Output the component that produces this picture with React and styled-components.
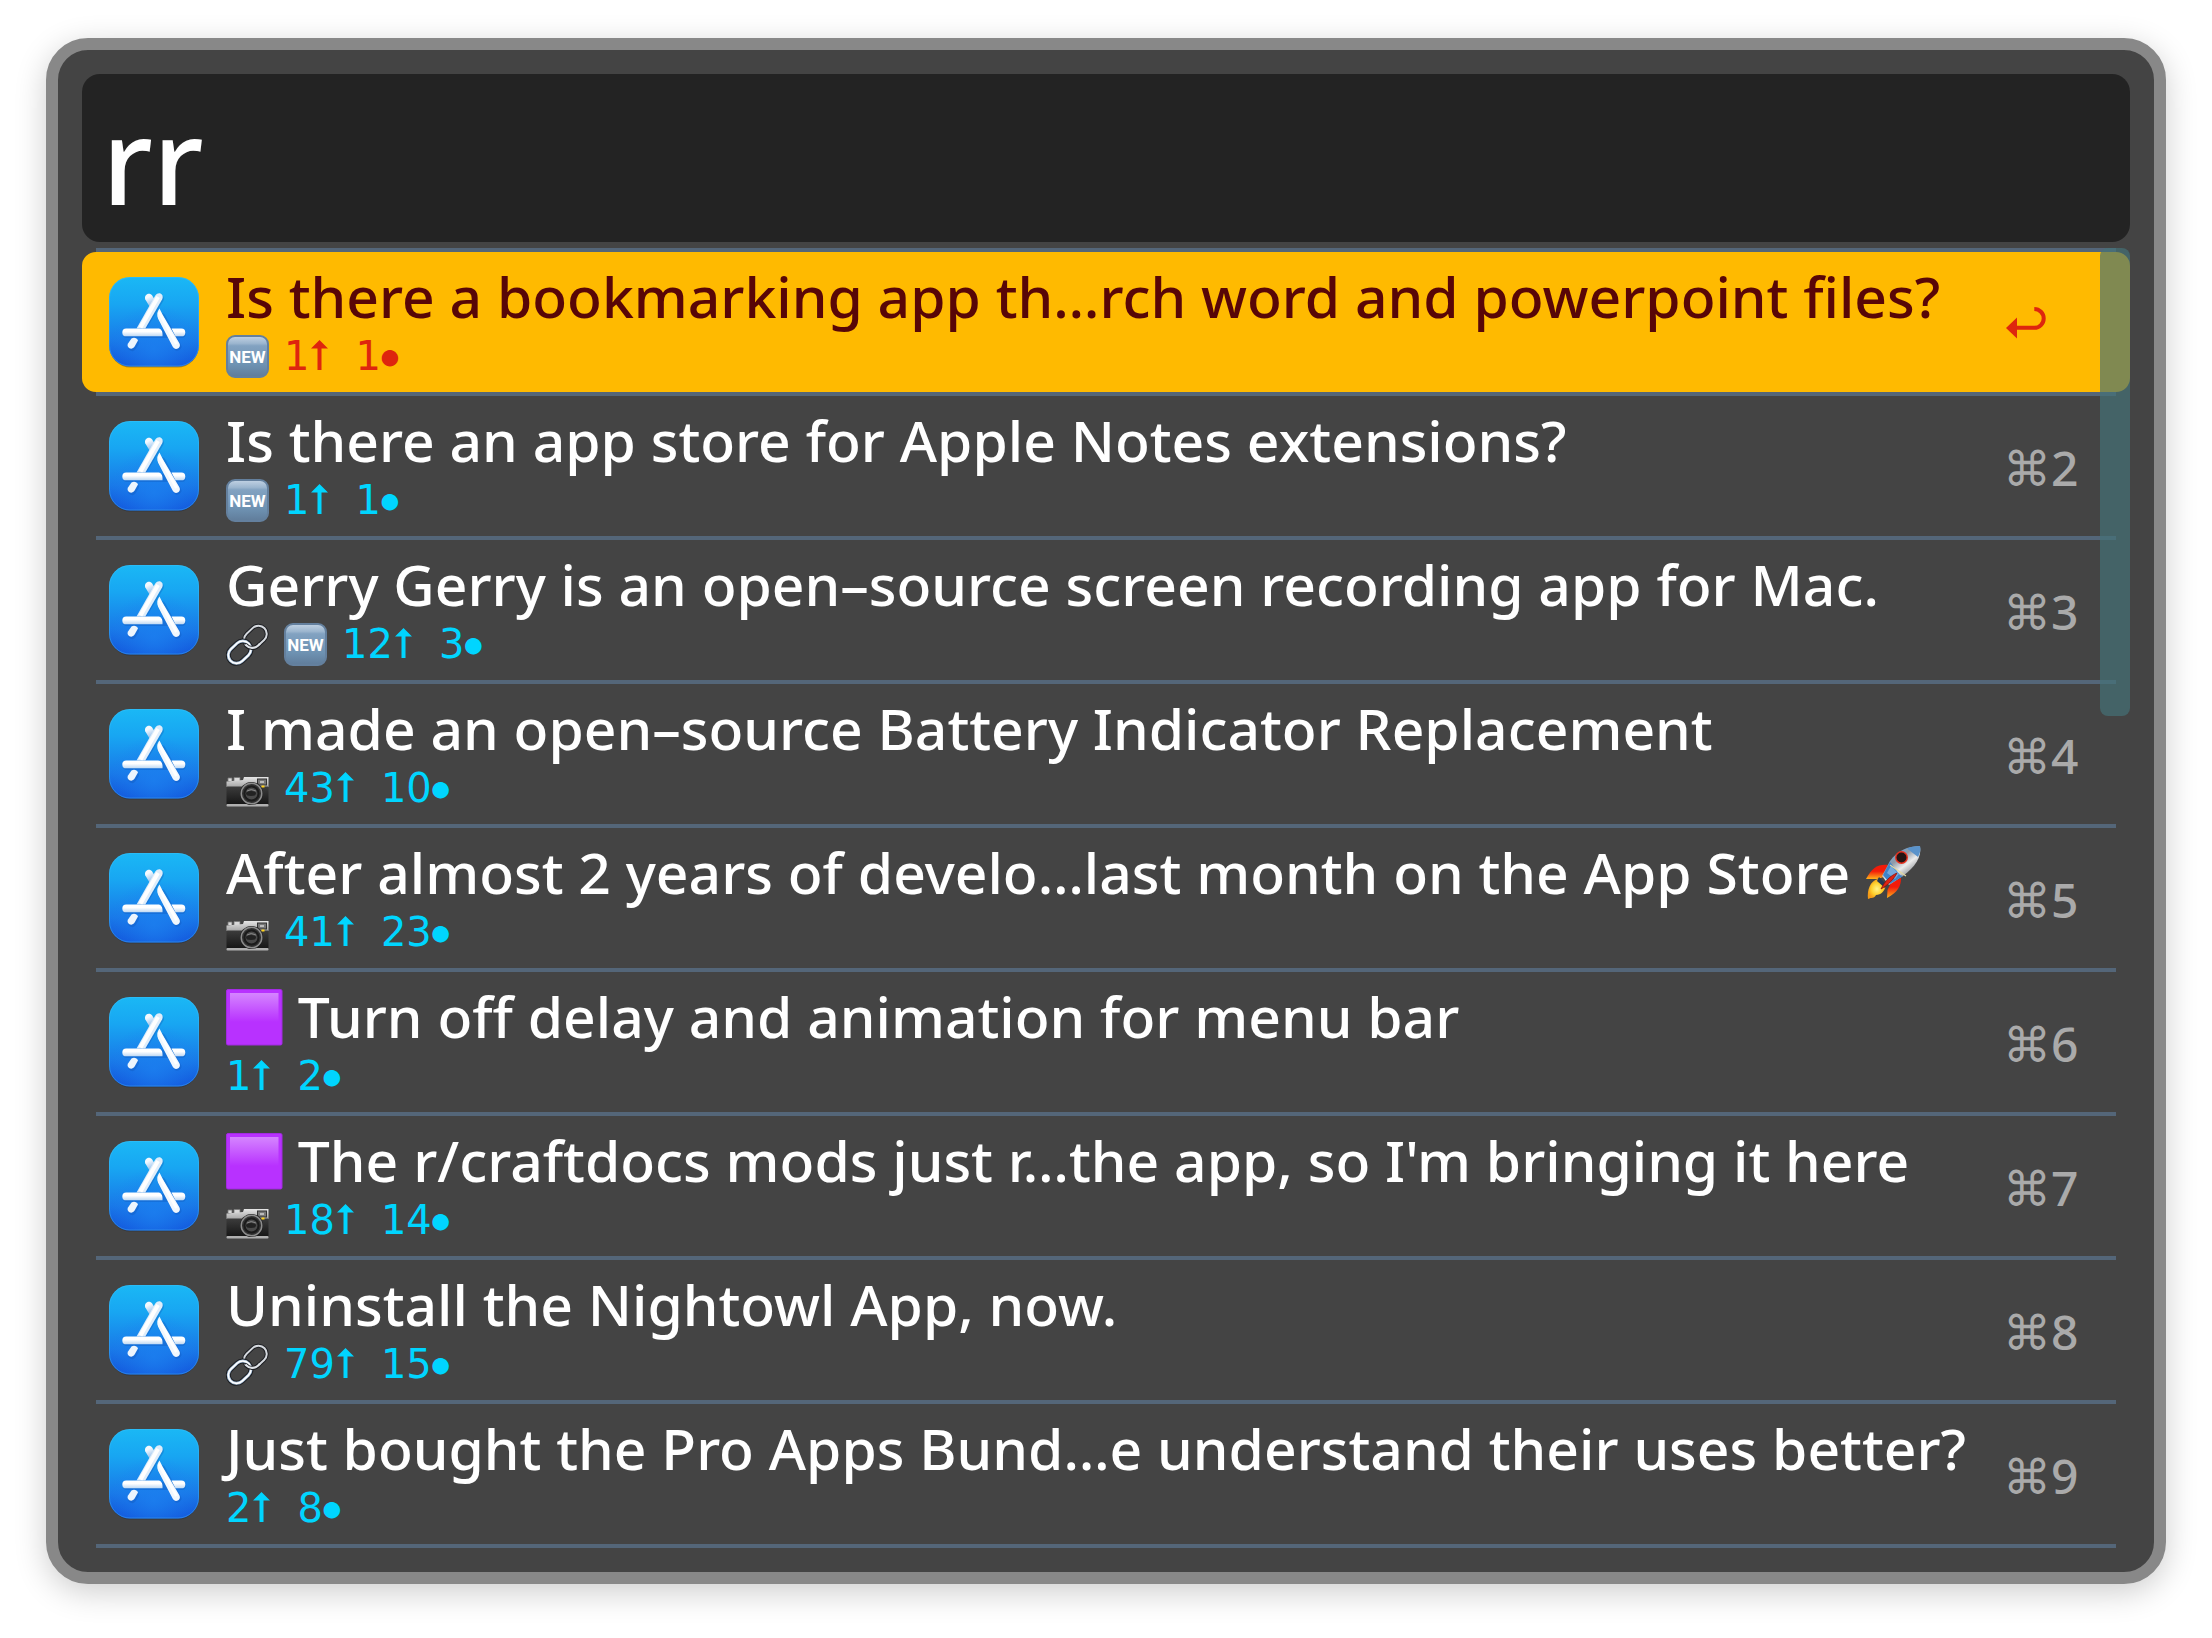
import React, { useId, useState } from "react";
import styled, { createGlobalStyle } from "styled-components";

const sans = `"Noto Sans", "Open Sans", sans-serif`;

const GlobalStyle = createGlobalStyle`
  *, *::before, *::after { box-sizing: border-box; }
  body { margin: 0; background: #fff; font-family: ${sans}; }
`;

const Page = styled.main`
  padding: 38px 46px 54px;
`;

const Launcher = styled.section`
  padding: 24px;
  border: 12px solid #888;
  border-radius: 42px;
  background: #444;
  box-shadow: 0 8px 32px rgba(0, 0, 0, 0.2);
`;

const SearchInput = styled.input`
  display: block;
  width: 100%;
  height: 168px;
  padding: 0 20px;
  border: 0;
  border-radius: 18px;
  outline: none;
  background: #232323;
  color: #fff;
  font: 500 120px ${sans};
`;

const Results = styled.div`
  position: relative;
  margin-top: 6px;
`;

const List = styled.ul`
  margin: 0;
  padding: 0;
  list-style: none;

  &::before {
    content: "";
    display: block;
    height: 4px;
    margin: 0 14px;
    background: #546679;
  }
`;

const Item = styled.li`
  &::after {
    content: "";
    display: block;
    height: 4px;
    margin: 0 14px;
    background: #546679;
  }
`;

const Row = styled.button`
  display: flex;
  align-items: center;
  width: 100%;
  height: 140px;
  padding: 0 48px 0 27px;
  border: 0;
  border-radius: 14px;
  background: ${(p) => (p.$selected ? "#ffba00" : "transparent")};
  color: ${(p) => (p.$selected ? "#580607" : "#fff")};
  text-align: left;
  cursor: pointer;
`;

const Body = styled.span`
  flex: 1;
  min-width: 0;
  padding: 11px 0 9px 27px;
`;

const Title = styled.span`
  display: block;
  white-space: nowrap;
  font: 500 57px/66px ${sans};
`;

const Meta = styled.span`
  display: flex;
  align-items: center;
  gap: 15px;
  height: 54px;
  color: ${(p) => (p.$selected ? "#de250e" : "#00d5ff")};
  font: 40px/54px "DejaVu Sans", sans-serif;
`;

const Counts = styled.span`
  display: flex;
  gap: 26px;
`;

const Count = styled.span`
  display: flex;
`;

const Dot = styled.span`
  display: flex;
  justify-content: center;
  width: 18px;
  font: 38px/54px "Liberation Sans", sans-serif;
`;

const ArrowSvg = styled.svg`
  width: 20px;
  height: 54px;
`;

const Shortcut = styled.span`
  display: flex;
  align-items: center;
  width: 79px;
  padding-top: 2px;
  color: #aaa;
  font: 500 48px ${sans};
`;

const ScrollThumb = styled.div`
  position: absolute;
  top: 0;
  right: 0;
  width: 30px;
  height: 468px;
  border-radius: 8px;
  background: rgba(68, 113, 120, 0.68);
  pointer-events: none;
`;

const StoreSvg = styled.svg`
  flex: none;
  width: 90px;
  height: 90px;
  overflow: visible;
`;

const GlyphSvg = styled.svg`
  flex: none;
  width: 43px;
  height: 43px;
`;

const TitleGlyph = styled.svg`
  width: 57px;
  height: 57px;
  vertical-align: -8px;
`;

const ReturnSvg = styled.svg`
  width: 40px;
  height: 32px;
  margin-left: 3px;
`;

function StoreIcon() {
  const id = useId();
  return (
    <StoreSvg viewBox="0 0 90 90" role="img" aria-label="App Store">
      <defs>
        <linearGradient id={id + "bg"} x1="0" y1="0" x2="0" y2="1">
          <stop offset="0" stopColor="#1ab8f5" />
          <stop offset="0.3" stopColor="#18a6f2" />
          <stop offset="0.72" stopColor="#1979e8" />
          <stop offset="1" stopColor="#1252da" />
        </linearGradient>
        <radialGradient id={id + "glow"} cx="0.5" cy="0.8" r="0.5">
          <stop offset="0" stopColor="#1c80f0" stopOpacity="0.8" />
          <stop offset="1" stopColor="#1c80f0" stopOpacity="0" />
        </radialGradient>
        <linearGradient id={id + "bar"} x1="0" y1="51" x2="0" y2="60" gradientUnits="userSpaceOnUse">
          <stop offset="0.4" stopColor="#fff" />
          <stop offset="1" stopColor="#b4d2f0" />
        </linearGradient>
        <linearGradient id={id + "back"} x1="38" y1="18" x2="44" y2="29" gradientUnits="userSpaceOnUse">
          <stop offset="0.2" stopColor="#f4f9fe" />
          <stop offset="1" stopColor="#86b8ea" />
        </linearGradient>
      </defs>
      <rect x="0.5" y="1.5" width="89" height="89" rx="21" fill="#222" opacity="0.35" />
      <rect width="90" height="89.500" rx="21" fill={`url(#${id}bg)`} />
      <rect width="90" height="89.500" rx="21" fill={`url(#${id}glow)`} />
      <rect x="0.5" y="0.5" width="89" height="88.500" rx="20.500" fill="none" stroke="#4ac4f8" strokeOpacity="0.35" />
      <g stroke="#0d4fae" strokeOpacity="0.3" strokeWidth="8" strokeLinecap="round" fill="none" transform="translate(0.800 1.500)">
        <path d="M50 20.500 31 52M52 39 67.500 68M25 64.500l-2.500 4M17 55.400H72" />
      </g>
      <path d="M36.300 22.400C34.500 17.500 40.500 14.500 43.200 18.500L46.500 24 42.200 32Z" fill={`url(#${id}back)`} />
      <path d="M62.500 51.500H72.400A3.900 3.900 0 0 1 72.400 59.300H66.500Z" fill={`url(#${id}bar)`} />
      <path d="M50.500 31.500C48 35 47.500 38 49.200 42L63.600 69.500C66 74.500 72.800 71 70.400 66.200L53.500 37.500Z" fill="#f1f7fd" />
      <path d="M50 35 67.500 67" stroke="#fff" strokeWidth="3" strokeOpacity="0.9" />
      <path d="M17.200 51.500H49C52 51.500 54 54 53.500 59.300H17.200A3.900 3.900 0 0 1 17.200 51.500Z" fill={`url(#${id}bar)`} />
      <path d="M46.300 18.500 27.500 51.500H36.300L53.200 22.300C55.500 17 49.500 13.800 46.300 18.500Z" fill="#dfedfa" />
      <path d="M49 20 31.500 50.500" stroke="#fff" strokeWidth="4" />
      <path d="M22.500 61.500C25 60 28 61 29 63.500L25.600 69.600C22.600 74 17 70.500 19 66.500Z" fill="#edf5fd" />
    </StoreSvg>
  );
}

function NewGlyph() {
  const id = useId();
  return (
    <GlyphSvg viewBox="0 0 43 43" role="img" aria-label="new">
      <defs>
        <linearGradient id={id} x1="0" y1="0" x2="0" y2="1">
          <stop offset="0" stopColor="#c3d3e4" />
          <stop offset="0.18" stopColor="#9cb6cf" />
          <stop offset="0.24" stopColor="#82a2c1" />
          <stop offset="0.7" stopColor="#6e92b2" />
          <stop offset="1" stopColor="#607c9a" />
        </linearGradient>
      </defs>
      <rect x="1" y="1" width="41" height="41" rx="8" fill={`url(#${id})`} stroke="#64809e" strokeWidth="2" />
      <text x="21.500" y="28" textAnchor="middle" fill="#fff" fontFamily="Roboto" fontWeight="700" fontSize="17">NEW</text>
    </GlyphSvg>
  );
}

function LinkGlyph() {
  return (
    <GlyphSvg viewBox="0 0 43 43" role="img" aria-label="link" fill="none">
      <g transform="rotate(-43 21.500 21.500)">
        <rect x="20" y="13" width="25" height="16.500" rx="8.250" stroke="#1c1e22" strokeWidth="4" />
        <rect x="20" y="13" width="25" height="16.500" rx="8.250" stroke="#d5d9de" strokeWidth="2" />
        <rect x="-2" y="13.500" width="25" height="16.500" rx="8.250" stroke="#1c1e22" strokeWidth="5" />
        <rect x="-2" y="13.500" width="25" height="16.500" rx="8.250" stroke="#a9c2dc" strokeWidth="3" />
        <rect x="-2" y="13.500" width="25" height="16.500" rx="8.250" stroke="#fff" strokeWidth="1.600" />
        <path d="M20 20V21.250A8.250 8.250 0 0 0 28.250 29.500H30" stroke="#1c1e22" strokeWidth="4" />
        <path d="M20 20V21.250A8.250 8.250 0 0 0 28.250 29.500H31" stroke="#dfe3e8" strokeWidth="2.200" />
      </g>
    </GlyphSvg>
  );
}

function CameraGlyph() {
  const id = useId();
  return (
    <GlyphSvg viewBox="0 0 43 43" role="img" aria-label="camera">
      <defs>
        <linearGradient id={id + "t"} x1="0" y1="0" x2="0" y2="1">
          <stop offset="0" stopColor="#e6e6e6" />
          <stop offset="1" stopColor="#a6a6a6" />
        </linearGradient>
        <linearGradient id={id + "b"} x1="0" y1="0" x2="0" y2="1">
          <stop offset="0" stopColor="#3c3c3c" />
          <stop offset="1" stopColor="#151515" />
        </linearGradient>
      </defs>
      <path d="M2 14V11h4v3M8 14v-3.500h6V14" fill="#d9d9d9" stroke="#777" strokeWidth="0.800" />
      <path d="M0.500 14.500 17 13l1-3H42.500V20H0.500Z" fill={`url(#${id}t)`} />
      <rect x="0.500" y="19.500" width="42" height="18.500" rx="1" fill={`url(#${id}b)`} />
      <rect x="0.500" y="37" width="42" height="2.500" rx="1" fill="#b0b0b0" />
      <rect x="31.500" y="12" width="9" height="6" fill="#777" stroke="#333" />
      <rect x="34" y="14" width="4" height="2" fill="#bbb" />
      <circle cx="25.500" cy="26.500" r="11.500" fill="#191919" />
      <circle cx="25.500" cy="26.500" r="10.300" fill="#333" stroke="#8d8d8d" strokeWidth="1.500" />
      <circle cx="25.500" cy="26.500" r="7" fill="#4a4a4a" stroke="#1b1b1b" strokeWidth="2" />
      <ellipse cx="25" cy="26.500" rx="5" ry="2.500" fill="#222" />
      <path d="M21 24Q25 21 30 24" stroke="#888" fill="none" />
      <rect x="35.500" y="18.500" width="3" height="2" fill="#ffd21c" />
    </GlyphSvg>
  );
}

function SquareGlyph() {
  const id = useId();
  return (
    <TitleGlyph viewBox="0 0 57 57" role="img" aria-label="purple square">
      <defs>
        <linearGradient id={id} x1="0" y1="0" x2="0" y2="1">
          <stop offset="0" stopColor="#d585ff" />
          <stop offset="1" stopColor="#b831ff" />
        </linearGradient>
      </defs>
      <rect x="0.500" y="0.500" width="55.500" height="55.500" rx="1.500" fill="#b831ff" stroke="#a22be2" />
      <rect x="4" y="4" width="48.500" height="29" fill={`url(#${id})`} />
    </TitleGlyph>
  );
}

function RocketGlyph() {
  const id = useId();
  return (
    <TitleGlyph viewBox="0 0 57 57" role="img" aria-label="rocket">
      <defs>
        <linearGradient id={id + "h"} x1="24" y1="10" x2="42" y2="34" gradientUnits="userSpaceOnUse">
          <stop offset="0" stopColor="#6fa6da" />
          <stop offset="0.3" stopColor="#8f9aa6" />
          <stop offset="0.6" stopColor="#ececec" />
          <stop offset="1" stopColor="#7f8388" />
        </linearGradient>
        <linearGradient id={id + "f"} x1="0" y1="0" x2="0" y2="1">
          <stop offset="0.45" stopColor="#f21b09" />
          <stop offset="1" stopColor="#ffb31a" />
        </linearGradient>
        <radialGradient id={id + "y"}>
          <stop offset="0" stopColor="#fff48a" />
          <stop offset="0.6" stopColor="#ffd02c" />
          <stop offset="1" stopColor="#f59a16" />
        </radialGradient>
      </defs>
      <path d="M23 20C13 19 7 23 1 34L12 34 19 32Z" fill={`url(#${id}f)`} />
      <path d="M36 33C36 41 33 47 22 53L22.500 45 26 38Z" fill={`url(#${id}f)`} />
      <path d="M13 34C5 36 2 45 3 54 7 52 9 54 11 50 16 50 20 46 21 40Z" fill={`url(#${id}y)`} />
      <path d="M55 1C43 1 32 6 25 16L17 31 24 40 38 31C50 22 57 12 55 1Z" fill={`url(#${id}h)`} />
      <path d="M25 17 18 30 25 39 38 31 35 30Z" fill="#3f83c8" />
      <path d="M26 21 34 29 30 34 22 28Z" fill="#75a9dc" />
      <path d="M55 1C49 1 45 2 42 3.500L53 12C55 8 56 5 55 1Z" fill="#5a93cb" />
      <path d="M25 20 41 31" stroke="#e4d9a0" strokeWidth="1.200" />
      <circle cx="36.500" cy="12.500" r="6.500" fill="#e8301d" />
      <circle cx="36.500" cy="12.500" r="5" fill="#241413" />
      <path d="M14 32 22 40 20 43 12 36Z" fill="#253853" />
      <path d="M32 28C25 31 20 36 16 44 23 40 29 34 32 28Z" fill="#e02312" stroke="#8d1209" strokeWidth="0.800" />
    </TitleGlyph>
  );
}

function ReturnIcon() {
  return (
    <ReturnSvg viewBox="0 0 40 32" role="img" aria-label="Return">
      <path d="M0 21 11 10.500V31.500Z" fill="#de250e" />
      <path d="M10 20.800H28.300A9.400 9.400 0 0 0 28.300 2" fill="none" stroke="#de250e" strokeWidth="4" />
    </ReturnSvg>
  );
}

function UpArrow() {
  return (
    <ArrowSvg viewBox="0 0 20 54" role="img" aria-label="upvotes">
      <path d="M10.500 11 19 19.500H12.500V41H8.500V19.500H2Z" fill="currentColor" />
    </ArrowSvg>
  );
}

const glyphs = { new: NewGlyph, link: LinkGlyph, camera: CameraGlyph };

const posts = [
  { title: "Is there a bookmarking app th…rch word and powerpoint files?", tags: ["new"], votes: 1, comments: 1 },
  { title: "Is there an app store for Apple Notes extensions?", tags: ["new"], votes: 1, comments: 1 },
  { title: "Gerry Gerry is an open–source screen recording app for Mac.", tags: ["link", "new"], votes: 12, comments: 3 },
  { title: "I made an open–source Battery Indicator Replacement", tags: ["camera"], votes: 43, comments: 10 },
  { title: "After almost 2 years of develo…last month on the App Store", rocket: true, tags: ["camera"], votes: 41, comments: 23 },
  { title: "Turn off delay and animation for menu bar", square: true, tags: [], votes: 1, comments: 2 },
  { title: "The r/craftdocs mods just r…the app, so I'm bringing it here", square: true, tags: ["camera"], votes: 18, comments: 14 },
  { title: "Uninstall the Nightowl App, now.", tags: ["link"], votes: 79, comments: 15 },
  { title: "Just bought the Pro Apps Bund…e understand their uses better?", tags: [], votes: 2, comments: 8 },
];

function Post({ post, number, selected, onSelect }) {
  return (
    <Item>
      <Row type="button" $selected={selected} aria-current={selected} onClick={onSelect}>
        <StoreIcon />
        <Body>
          <Title>
            {post.square && <><SquareGlyph />{" "}</>}
            {post.title}
            {post.rocket && <>{" "}<RocketGlyph /></>}
          </Title>
          <Meta $selected={selected}>
            {post.tags.map((tag) => {
              const Glyph = glyphs[tag];
              return <Glyph key={tag} />;
            })}
            <Counts>
              <Count>{post.votes}<UpArrow /></Count>
              <Count>{post.comments}<Dot>●</Dot></Count>
            </Counts>
          </Meta>
        </Body>
        <Shortcut>{selected ? <ReturnIcon /> : `⌘${number}`}</Shortcut>
      </Row>
    </Item>
  );
}

export default function App() {
  const [query, setQuery] = useState("rr");
  const [selected, setSelected] = useState(0);
  return (
    <>
      <GlobalStyle />
      <Page>
        <Launcher>
          <SearchInput aria-label="Search" value={query} onChange={(e) => setQuery(e.target.value)} />
          <Results>
            <List>
              {posts.map((post, i) => (
                <Post key={post.title} post={post} number={i + 1} selected={i === selected} onSelect={() => setSelected(i)} />
              ))}
            </List>
            <ScrollThumb />
          </Results>
        </Launcher>
      </Page>
    </>
  );
}
